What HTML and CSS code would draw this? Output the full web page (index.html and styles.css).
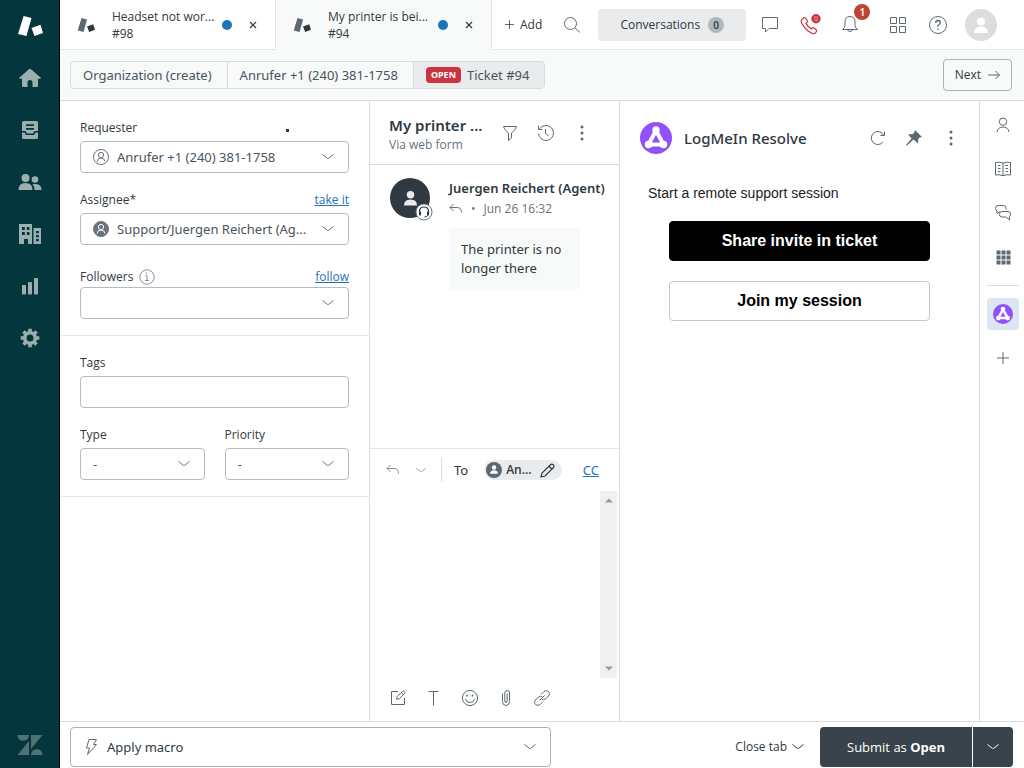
FILE: index.html
```html
<!DOCTYPE html>
<html lang="en">
<head>
<meta charset="utf-8">
<title>Ticket #94</title>
<link rel="stylesheet" href="styles.css">
</head>
<body>
<svg class="sprite" aria-hidden="true">
  <symbol id="chev" viewBox="0 0 12 8"><path d="M.8 1.7 5.3 5.3q.7.5 1.4 0L11.2 1.7" fill="none" stroke="currentColor" stroke-linecap="round"/></symbol>
  <symbol id="blocks" viewBox="0 0 26 22"><path d="M6.600 1 14.500 3 9.500 21 1 19z"/><path class="blocks-small" d="M14.500 13 23.500 9.800 26 18 17.500 21z"/></symbol>
  <symbol id="dots" viewBox="0 0 4 16"><g fill="currentColor"><circle cx="2" cy="2" r="1.500"/><circle cx="2" cy="8" r="1.500"/><circle cx="2" cy="14" r="1.500"/></g></symbol>
  <symbol id="reply" viewBox="0 0 14 12"><path d="M4.500 1 1 4.500 4.500 8M1 4.500H8q4.500 0 4.500 5" fill="none" stroke="currentColor"/></symbol>
  <symbol id="x" viewBox="0 0 8 8"><path d="M1 1 7 7M7 1 1 7" stroke="currentColor" stroke-width="1.200"/></symbol>
  <symbol id="plus" viewBox="0 0 12 12"><path d="M6 0V12M0 6H12" stroke="currentColor"/></symbol>
  <symbol id="resolve" viewBox="0 0 32 32"><circle cx="16" cy="16" r="16" fill="#9050fb"/><path d="M16 8.500 8.500 22.500H23.500z" fill="none" stroke="#fff" stroke-width="4" stroke-linejoin="round"/><circle cx="16" cy="8" r="3.700" fill="#fff"/><circle cx="8.500" cy="22.500" r="3.700" fill="#fff"/><circle cx="23.500" cy="22.500" r="3.700" fill="#fff"/></symbol>
  <symbol id="person" viewBox="0 0 14 16"><circle cx="7" cy="4.500" r="4"/><path d="M0 16Q0 9.500 7 9.500T14 16z"/></symbol>
</svg>

<nav class="nav" aria-label="Main">
  <a class="nav-item nav-logo" href="#" aria-label="Support"><svg width="26" height="22"><use href="#blocks"/></svg></a>
  <a class="nav-item" href="#" aria-label="Home"><svg width="22" height="20" viewBox="0 0 22 20"><path d="M10 1.300q1-.9 2 0L21.500 9.500q.8 1-.5 1.300H19V17.500q0 1.500-1.500 1.500H13.500V14.500Q13.500 12 11 12T8.500 14.500V19H4.500Q3 19 3 17.500V10.800H1Q-.3 10.500.5 9.500z"/></svg></a>
  <a class="nav-item" href="#" aria-label="Views"><svg width="18" height="20" viewBox="0 0 18 20"><path fill-rule="evenodd" d="M2.500 1H15.500Q17 1 17 2.500V11H13.500L12 13.500H6L4.500 11H1V2.500Q1 1 2.500 1zM5 4.200V6H13V4.200zM5 8V9.800H13V8z"/><path d="M1 12.500H3.500L5 15H13L14.500 12.500H17V17.500Q17 19 15.500 19H2.500Q1 19 1 17.500z"/></svg></a>
  <a class="nav-item" href="#" aria-label="Customers"><svg width="24" height="18" viewBox="0 0 24 18"><circle cx="7.500" cy="5" r="4"/><path d="M.5 17Q.5 10 7.500 10T14.500 17z"/><circle cx="17" cy="6.500" r="3.300"/><path d="M14.500 11.300Q23.500 10 23.500 17H16.500Q16.500 13.500 14.500 11.300z"/></svg></a>
  <a class="nav-item" href="#" aria-label="Organizations"><svg width="24" height="22" viewBox="0 0 24 22"><path fill-rule="evenodd" d="M1 1H14V21H10V16H6V21H1zM4 4V7H6.800V4zM8.800 4V7H11.500V4zM4 9V12H6.800V9zM8.800 9V12H11.500V9z"/><path fill-rule="evenodd" d="M15.500 5H23V21H15.500zM18 8V10.300H20.800V8zM18 12V14.300H20.800V12zM18 16V18.300H20.800V16z"/></svg></a>
  <a class="nav-item" href="#" aria-label="Reporting"><svg width="18" height="18" viewBox="0 0 18 18"><rect x="1" y="8" width="4" height="9.500" rx="1"/><rect x="7" y="5" width="4" height="12.500" rx="1"/><rect x="13" y="1" width="4" height="16.500" rx="1"/></svg></a>
  <a class="nav-item" href="#" aria-label="Admin"><svg width="20" height="20" viewBox="-10 -10 20 20"><circle r="5.300" fill="none" stroke="currentColor" stroke-width="3.600"/><path d="M0-9.300V-6M0 9.300V6M-9.300 0H-6M9.300 0H6M-6.500-6.500-4.500-4.500M6.500 6.500 4.500 4.500M-6.500 6.500-4.500 4.500M6.500-6.500 4.500-4.500" stroke="currentColor" stroke-width="3.600"/></svg></a>
  <a class="nav-item nav-brand" href="#" aria-label="Zendesk"><svg width="26" height="20" viewBox="0 0 26 20"><path d="M.5 0H12Q11.500 5.800 6.200 5.800T.5 0zM12 6V20H.5zM14 0H25.500L14 14zM14 20Q14.500 14.200 19.800 14.200T25.500 20z"/></svg></a>
</nav>

<div class="shell">
  <header class="topbar">
    <div class="tab">
      <svg class="tab-icon" width="18" height="16"><use href="#blocks"/></svg>
      <a class="tab-text" href="#">Headset not wor...<br>#98</a>
      <span class="tab-dot"></span>
      <button class="icon-btn tab-close" aria-label="Close #98"><svg width="8" height="8"><use href="#x"/></svg></button>
    </div>
    <div class="tab tab-active">
      <svg class="tab-icon" width="18" height="16"><use href="#blocks"/></svg>
      <a class="tab-text" href="#">My printer is bei...<br>#94</a>
      <span class="tab-dot"></span>
      <button class="icon-btn tab-close" aria-label="Close #94"><svg width="8" height="8"><use href="#x"/></svg></button>
    </div>
    <div class="tools">
      <button class="icon-btn add"><svg width="9" height="9"><use href="#plus"/></svg>Add</button>
      <button class="icon-btn search" aria-label="Search"><svg width="18" height="18" viewBox="0 0 18 18" fill="none" stroke="currentColor"><circle cx="7.500" cy="7.500" r="6"/><path d="M12 12 17 16.500"/></svg></button>
      <button class="conversations">Conversations <span class="count">0</span></button>
      <button class="icon-btn tool tool-chat" aria-label="Chat"><svg width="18" height="18" viewBox="0 0 18 18" fill="none" stroke="currentColor"><path d="M1.500 1.500H16.500V12.500H8L4.500 16V12.500H1.500z"/></svg></button>
      <button class="icon-btn tool tool-call" aria-label="Call"><svg width="22" height="22" viewBox="0 0 22 22"><path d="M3 5.200 5.200 3.700Q6 3.400 6.500 4L8.500 7Q8.900 8 8 8.600L7 9.400Q9 13 12.300 15L13.200 14Q14 13.200 14.800 13.800L17.300 16Q18 16.700 17.500 17.500L16 19.300Q14.500 20.500 11.500 18.600Q5.500 14.800 2.600 9Q1.600 6.500 3 5.200z" fill="none" stroke="currentColor" stroke-width="1.200"/><circle cx="17" cy="4.700" r="4.700" fill="currentColor"/><path d="M15.500 2.500H18.500V4.300H15.500zM15.500 5.500H18.500V7H15.500z" fill="none" stroke="#e58a92" stroke-width=".7"/></svg></button>
      <button class="icon-btn tool tool-bell" aria-label="Notifications"><svg width="18" height="18" viewBox="0 0 18 18" fill="none" stroke="currentColor"><path d="M9 .5Q14 .5 14 6V9.500Q14.200 12 16.500 13.500H1.500Q3.800 12 4 9.500V6Q4 .5 9 .5zM6.500 13.500Q7 15.500 9 15.500T11.500 13.500"/></svg><span class="badge">1</span></button>
      <button class="icon-btn tool tool-apps" aria-label="Products"><svg width="18" height="18" viewBox="0 0 18 18" fill="none" stroke="currentColor"><path d="M1.500 1.500H7.500V7.500H1.500zM10.500 1.500H16.500V7.500H10.500zM1.500 10.500H7.500V16.500H1.500zM10.500 10.500H16.500V16.500H10.500z"/></svg></button>
      <button class="icon-btn tool" aria-label="Help"><svg width="20" height="20" viewBox="0 0 20 20" fill="none" stroke="currentColor"><circle cx="10" cy="10" r="8.500"/><path d="M7.700 8Q7.700 5.500 10 5.500T12.300 7.700Q12.300 8.800 11 9.500T10 12M10 13.500V15" stroke-width="1.300"/></svg></button>
      <button class="icon-btn avatar-top" aria-label="Profile"><svg width="14" height="16" fill="#fff"><use href="#person"/></svg></button>
    </div>
  </header>

  <div class="crumbbar">
    <nav class="crumbs" aria-label="Breadcrumb">
      <a href="#">Organization (create)</a>
      <a href="#">Anrufer +1 (240) 381-1758</a>
      <a href="#" class="crumb-on"><span class="open">OPEN</span>Ticket #94</a>
    </nav>
    <button class="next">Next <svg width="14" height="10" viewBox="0 0 14 10" fill="none" stroke="currentColor"><path d="M1 5H12.500M8.500 1 12.500 5 8.500 9"/></svg></button>
  </div>

  <main class="work">
    <form class="props">
      <div class="section">
        <div class="field">
          <div class="label-row"><label for="requester">Requester</label><span class="mark"></span></div>
          <div class="select has-icon">
            <svg class="lead" width="16" height="16" viewBox="0 0 16 16" fill="none" stroke="currentColor"><circle cx="8" cy="8" r="7.500"/><circle cx="8" cy="6" r="2.600"/><path d="M4 12.500Q4.500 9 8 9T12 12.500"/></svg>
            <select id="requester"><option>Anrufer +1 (240) 381-1758</option></select>
            <svg class="chev" width="12" height="8"><use href="#chev"/></svg>
          </div>
        </div>
        <div class="field">
          <div class="label-row"><label for="assignee">Assignee*</label><a href="#">take it</a></div>
          <div class="select has-icon">
            <svg class="lead" width="16" height="16" viewBox="0 0 16 16" fill="none" stroke="#fff"><circle cx="8" cy="8" r="7.500" fill="#68737d" stroke="#68737d"/><circle cx="8" cy="6" r="2.600"/><path d="M4 12.500Q4.500 9 8 9T12 12.500"/></svg>
            <select id="assignee"><option>Support/Juergen Reichert (Ag...</option></select>
            <svg class="chev" width="12" height="8"><use href="#chev"/></svg>
          </div>
        </div>
        <div class="field field-tight">
          <div class="label-row"><label for="followers">Followers</label><svg class="info" width="16" height="16" viewBox="0 0 16 16" fill="none" stroke="currentColor"><circle cx="8" cy="8" r="7.200"/><path d="M6.500 6.500H8V11.500M6 11.500H10M7.500 3.500V5"/></svg><a href="#">follow</a></div>
          <div class="select">
            <select id="followers"><option></option></select>
            <svg class="chev" width="12" height="8"><use href="#chev"/></svg>
          </div>
        </div>
      </div>
      <div class="section">
        <div class="field">
          <div class="label-row"><label for="tags">Tags</label></div>
          <input class="box" id="tags" type="text">
        </div>
        <div class="pair">
          <div class="field">
            <div class="label-row"><label for="type">Type</label></div>
            <div class="select"><select id="type"><option>-</option></select><svg class="chev" width="12" height="8"><use href="#chev"/></svg></div>
          </div>
          <div class="field">
            <div class="label-row"><label for="priority">Priority</label></div>
            <div class="select"><select id="priority"><option>-</option></select><svg class="chev" width="12" height="8"><use href="#chev"/></svg></div>
          </div>
        </div>
      </div>
    </form>

    <section class="thread">
      <header class="thread-head">
        <div class="thread-title"><h1>My printer ...</h1><p>Via web form</p></div>
        <button class="icon-btn" aria-label="Filter"><svg width="16" height="16" viewBox="0 0 16 16" fill="none" stroke="currentColor"><path d="M1.500 1.500H14.500Q14.500 4 9.500 8V13L6.500 15.500V8Q1.500 4 1.500 1.500z"/></svg></button>
        <button class="icon-btn" aria-label="History"><svg width="18" height="18" viewBox="0 0 18 18" fill="none" stroke="currentColor"><path d="M2.300 5Q4.500 1.500 9 1.500A7.500 7.500 0 1 1 1.500 9.500M1.500 1.500V5.500H5.500M8.500 5V9.500L11.500 12"/></svg></button>
        <button class="icon-btn" aria-label="More"><svg width="4" height="16"><use href="#dots"/></svg></button>
      </header>
      <article class="message">
        <div class="avatar">
          <svg width="13" height="16" fill="#e9ebed"><use href="#person"/></svg>
          <svg class="headset" width="18" height="18" viewBox="0 0 18 18"><circle cx="9" cy="9" r="8" fill="#fff" stroke="#68737d"/><path d="M4.500 10V8.500Q4.500 4 9 4T13.500 8.500V10" fill="none" stroke="#2f3941" stroke-width="1.200"/><path d="M4 8.500H6V12.500H5Q4 12.500 4 11.500zM14 8.500H12V12.500H13Q14 12.500 14 11.500z" fill="#2f3941"/><path d="M13 12Q12.500 14 9.500 14" fill="none" stroke="#2f3941"/></svg>
        </div>
        <div class="message-body">
          <h2>Juergen Reichert (Agent)</h2>
          <p class="meta"><svg width="14" height="12"><use href="#reply"/></svg><span>•</span><time>Jun 26 16:32</time></p>
          <p class="bubble">The printer is no longer there</p>
        </div>
      </article>
      <div class="composer">
        <div class="to-row">
          <button class="icon-btn reply" aria-label="Reply type"><svg width="14" height="12"><use href="#reply"/></svg><svg width="10" height="7"><use href="#chev"/></svg></button>
          <span class="to">To</span>
          <button class="chip"><svg width="16" height="16" viewBox="0 0 16 16"><circle cx="8" cy="8" r="8" fill="#5c6970"/><circle cx="8" cy="5.500" r="2.200" fill="#fff"/><path d="M4 11.800Q4 8.200 8 8.200T12 11.800z" fill="#fff"/></svg>An...<svg class="pen" width="15" height="15" viewBox="0 0 15 15" fill="none" stroke="currentColor" stroke-width="1.200"><path d="M1 14 2 10 10.500 1.800Q11.800.6 13.200 1.800T13.500 4.500L5 13zM9 3.300 11.800 6"/></svg></button>
          <a class="cc" href="#">CC</a>
        </div>
        <div class="editor">
          <textarea aria-label="Reply"></textarea>
          <div class="scroll"><svg width="8" height="5" viewBox="0 0 8 5"><path d="M4 .5 8 4.500H0z"/></svg><svg width="8" height="5" viewBox="0 0 8 5"><path d="M0 .5H8L4 4.500z"/></svg></div>
        </div>
        <div class="format">
          <button class="icon-btn" aria-label="Compose"><svg width="16" height="16" viewBox="0 0 16 16" fill="none" stroke="currentColor"><path d="M8 1.500H1.500V14.500H14.500V8M6.500 9.500 7.300 6.500 12.500 1.300Q13.500.7 14.500 1.500T14.500 3.500L9.400 8.700zM11.300 2.500 13.500 4.700"/></svg></button>
          <button class="icon-btn" aria-label="Text"><svg width="16" height="16" viewBox="0 0 16 16" fill="none" stroke="currentColor"><path d="M2.500 1.500H12.500M7.500 1.500V15.500"/></svg></button>
          <button class="icon-btn" aria-label="Emoji"><svg width="18" height="18" viewBox="0 0 18 18" fill="none" stroke="currentColor"><circle cx="9" cy="9" r="7.600"/><path d="M4.500 10Q5.300 13.500 9 13.500T13.500 10"/><path d="M6 5.800V7.400M11.500 5.800V7.400" stroke-width="1.600"/></svg></button>
          <button class="icon-btn" aria-label="Attach"><svg width="10" height="18" viewBox="0 0 10 18" fill="none" stroke="currentColor"><path d="M1.500 4.500V12.500Q1.500 16.500 5 16.500T8.500 12.500V4Q8.500 1.500 6.200 1.500T3.800 4V12Q3.800 13.500 5 13.500T6.200 12V4.500"/></svg></button>
          <button class="icon-btn" aria-label="Link"><svg width="18" height="18" viewBox="0 0 18 18" fill="none" stroke="currentColor"><path d="M6.500 11.500 11.500 6.500M8 5.500 11 2.500Q13.300.7 15.500 2.500T15.500 7L12.500 10Q10.500 11.500 8.500 10M10 12.500 7 15.500Q4.700 17.300 2.500 15.500T2.500 11L5.500 8Q7.500 6.500 9.500 8"/></svg></button>
        </div>
      </div>
    </section>

    <section class="app">
      <header class="app-head">
        <svg width="32" height="32"><use href="#resolve"/></svg>
        <h2>LogMeIn Resolve</h2>
        <button class="icon-btn" aria-label="Reload"><svg width="16" height="16" viewBox="0 0 16 16" fill="none" stroke="currentColor"><path d="M12.800 12.200A6.500 6.500 0 1 1 13.800 5.500M14.500 1.500V5.500H10.500"/></svg></button>
        <button class="icon-btn" aria-label="Unpin"><svg width="16" height="16" viewBox="0 0 16 16" fill="currentColor"><path d="M9 0 16 7Q13.500 7 12.300 8.800L12 13.500 7.500 9.500 1 15.500 0 15 5.500 8.500 2 4.500 7 4Q8.800 2.800 9 0z"/></svg></button>
        <button class="icon-btn" aria-label="More"><svg width="4" height="16"><use href="#dots"/></svg></button>
      </header>
      <p class="app-text">Start a remote support session</p>
      <div class="app-actions">
        <button class="app-btn app-primary">Share invite in ticket</button>
        <button class="app-btn">Join my session</button>
      </div>
    </section>

    <aside class="rail" aria-label="Apps">
      <button class="icon-btn" aria-label="User"><svg width="14" height="16" viewBox="0 0 14 16" fill="none" stroke="currentColor"><circle cx="7" cy="4.700" r="3.700"/><path d="M1 15Q2 10 7 10T13 15"/></svg></button>
      <button class="icon-btn" aria-label="Knowledge"><svg width="18" height="16" viewBox="0 0 18 16" fill="none" stroke="currentColor"><path d="M9 2Q5 .7 1.500 1.500V14Q5 13.200 9 14.700Q13 13.200 16.500 14V1.500Q13 .7 9 2zM9 2V14.700M4 4.500H6.500M4 7.500H6.500M4 10.500H6.500M11.500 4.500H14M11.500 7.500H14M11.500 10.500H14"/></svg></button>
      <button class="icon-btn" aria-label="Side conversations"><svg width="18" height="18" viewBox="0 0 18 18" fill="none" stroke="currentColor"><path d="M6 7.500 3 9.500V6.800Q1.500 6.300 1.500 4.500Q1.500 1.500 4 1.500H9.500Q12 1.500 12 4V5.500"/><path d="M8 7.500H14Q16.500 7.500 16.500 10Q16.500 12 15.500 12.600V16L12 13H8Q5.500 13 5.500 10.200T8 7.500z"/></svg></button>
      <button class="icon-btn" aria-label="All apps"><svg width="15" height="15" viewBox="0 0 15 15" fill="currentColor"><path d="M.5.5H4.500V4.500H.5zM5.500.5H9.500V4.500H5.500zM10.500.5H14.500V4.500H10.500zM.5 5.500H4.500V9.500H.5zM5.500 5.500H9.500V9.500H5.500zM10.500 5.500H14.500V9.500H10.500zM.5 10.500H4.500V14.500H.5zM5.500 10.500H9.500V14.500H5.500zM10.500 10.500H14.500V14.500H10.500z"/></svg></button>
      <hr>
      <button class="icon-btn rail-on" aria-label="LogMeIn Resolve"><svg width="20" height="20"><use href="#resolve"/></svg></button>
      <button class="icon-btn" aria-label="Add app"><svg width="12" height="12"><use href="#plus"/></svg></button>
    </aside>
  </main>

  <footer class="footer">
    <button class="macro"><svg width="14" height="18" viewBox="0 0 14 18" fill="none" stroke="currentColor"><path d="M4 1.500H11.500L8.500 6.500H11.500L2.500 16.500 4.500 10H1.500z"/></svg><span>Apply macro</span><svg width="12" height="8"><use href="#chev"/></svg></button>
    <button class="icon-btn close-tab">Close tab <svg width="12" height="8"><use href="#chev"/></svg></button>
    <div class="submit">
      <button class="submit-main">Submit as <b>Open</b></button>
      <button class="submit-more" aria-label="More submit options"><svg width="12" height="8"><use href="#chev"/></svg></button>
    </div>
  </footer>
</div>
</body>
</html>
```
FILE: styles.css
```css
* { box-sizing: border-box; }

body {
  margin: 0;
  display: flex;
  min-height: 100vh;
  background: #fff;
  color: #2f3941;
  font: 13px/20px "Noto Sans", "Open Sans", sans-serif;
}

h1, h2, p { margin: 0; }
svg { display: block; flex: none; }
button, input, select, textarea { font: inherit; color: inherit; }
a { color: #1f73b7; }

.sprite { position: absolute; width: 0; height: 0; }

/* Small interface text */
.tab-text, .add, .conversations, .next, .label-row, .meta,
.thread-title p, .chip, .close-tab, .submit {
  font-family: "Open Sans", "Noto Sans", sans-serif;
}

.icon-btn {
  display: flex;
  align-items: center;
  justify-content: center;
  flex: none;
  padding: 0;
  border: 0;
  background: none;
  color: #5c6970;
}

/* Main navigation */
.nav {
  display: flex;
  flex-direction: column;
  flex: none;
  width: 60px;
  background: #03363d;
  border-right: 1px solid #000;
}
.nav-item {
  display: flex;
  align-items: center;
  justify-content: center;
  height: 52px;
  color: #9bafb1;
  fill: currentColor;
}
.nav-logo { color: #fff; }
.nav-brand { margin-top: auto; height: 46px; color: #4f7277; }

.shell {
  display: flex;
  flex-direction: column;
  flex: 1;
  min-width: 0;
}

/* Tabs and tools */
.topbar { display: flex; height: 50px; }
.tab {
  display: flex;
  align-items: center;
  flex: none;
  width: 216px;
  padding: 0 17px;
  border: solid #e4e7e8;
  border-width: 0 1px 1px 0;
}
.tab-active { background: #f8f9f9; border-bottom-color: #f8f9f9; }
.tab-icon { fill: #5c6970; }
.blocks-small { fill: currentColor; }
.tab-text {
  flex: 1;
  margin-left: 17px;
  color: #2f3941;
  font-size: 12px;
  line-height: 17px;
  text-decoration: none;
  white-space: nowrap;
}
.tab-dot { width: 10px; height: 10px; border-radius: 50%; background: #1f73b7; }
.tab-close { margin-left: 16px; width: 10px; color: #2f3941; }

.tools {
  display: flex;
  align-items: center;
  flex: 1;
  min-width: 0;
  padding: 0 27px 0 13px;
  border-bottom: 1px solid #e4e7e8;
}
.add { gap: 6px; color: #2f3941; font-size: 12px; }
.search { margin: 0 17px 0 21px; }
.conversations {
  display: flex;
  align-items: center;
  justify-content: center;
  gap: 8px;
  width: 148px;
  height: 32px;
  border: 0;
  border-radius: 4px;
  background: #e9ebed;
  font-size: 12px;
}
.count {
  width: 16px;
  height: 16px;
  border-radius: 50%;
  background: #b0b8be;
  font-size: 10px;
  font-weight: 600;
  line-height: 16px;
}
.tool { width: 40px; }
.tool-chat { margin-left: 4px; }
.tool-call { color: #cc3340; }
.tool-bell { position: relative; }
.tool-apps { margin-left: 8px; }
.badge {
  position: absolute;
  top: -12px;
  right: 0;
  width: 16px;
  height: 16px;
  border-radius: 50%;
  background: #bd4333;
  color: #fff;
  font-size: 10px;
  font-weight: 600;
  line-height: 16px;
}
.avatar-top {
  width: 32px;
  height: 32px;
  margin-left: auto;
  border-radius: 50%;
  background: #ddd;
}

/* Breadcrumbs */
.crumbbar {
  display: flex;
  align-items: center;
  justify-content: space-between;
  height: 51px;
  padding: 0 12px 0 10px;
  background: #f8f9f9;
  border-bottom: 1px solid #d8dcde;
}
.crumbs {
  display: flex;
  border: 1px solid #d8dcde;
  border-radius: 4px;
  overflow: hidden;
}
.crumbs a {
  display: flex;
  align-items: center;
  padding: 0 15px 0 12px;
  height: 26px;
  color: #49545c;
  text-decoration: none;
}
.crumbs a + a { border-left: 1px solid #d8dcde; }
.crumbs .crumb-on { background: #e9ebed; }
.open {
  margin-right: 6px;
  padding: 0 5px;
  border-radius: 4px;
  background: #cc3340;
  color: #fff;
  font-size: 9px;
  font-weight: 700;
  line-height: 16px;
}
.next {
  display: flex;
  align-items: center;
  gap: 6px;
  height: 32px;
  padding: 0 10px 0 11px;
  border: 1px solid #a9b2b9;
  border-radius: 4px;
  background: none;
  font-size: 12px;
}
.next svg { color: #5c6970; }

/* Workspace columns */
.work {
  display: grid;
  grid-template-columns: 310px 250px minmax(0, 1fr) 44px;
  flex: 1;
}
.props, .thread, .app { border-right: 1px solid #d8dcde; }

.section {
  display: flex;
  flex-direction: column;
  gap: 16px;
  padding: 16px 20px;
  border-bottom: 1px solid #e4e7e8;
}
.field { display: flex; flex-direction: column; gap: 3px; min-width: 0; }
.field-tight { gap: 0; padding-top: 5px; }
.label-row {
  display: flex;
  align-items: center;
  height: 21px;
  font-size: 12px;
}
.label-row label { font-weight: 500; }
.label-row a { margin-left: auto; }
.info { margin-left: 6px; color: #87929d; }
.mark {
  width: 3px;
  height: 3px;
  margin: 6px 60px 0 auto;
  background: #2f3941;
}
.box, .select select {
  width: 100%;
  height: 32px;
  padding: 0 12px;
  border: 1px solid #b5bcc1;
  border-radius: 4px;
  background: none;
  color: #49545c;
}
.select { position: relative; }
.select select { appearance: none; }
.select.has-icon select { padding-left: 36px; }
.lead { position: absolute; left: 13px; top: 8px; color: #68737d; }
.chev { position: absolute; right: 15px; top: 12px; color: #68737d; pointer-events: none; }
.pair { display: grid; grid-template-columns: 1fr 1fr; gap: 20px; }

/* Conversation */
.thread { display: flex; flex-direction: column; }
.thread-head {
  display: flex;
  align-items: center;
  gap: 19px;
  height: 64px;
  padding: 0 29px 0 19px;
  border-bottom: 1px solid #d8dcde;
}
.thread-title { flex: 1; min-width: 0; padding-top: 4px; }
.thread-title h1 { font-size: 15px; font-weight: 600; line-height: 20px; white-space: nowrap; }
.thread-title p { color: #68737d; font-size: 12px; }
.thread-head .icon-btn:last-child { width: 16px; }

.message { display: flex; flex: 1; gap: 19px; padding: 13px 0 0 20px; }
.avatar {
  position: relative;
  display: flex;
  align-items: center;
  justify-content: center;
  flex: none;
  width: 40px;
  height: 40px;
  border-radius: 50%;
  background: #2f3941;
}
.headset { position: absolute; right: -3px; bottom: -3px; }
.message-body h2 { font-size: 13px; font-weight: 600; white-space: nowrap; }
.meta { display: flex; align-items: center; gap: 8px; padding-top: 1px; color: #68737d; font-size: 12px; }
.bubble {
  width: 131px;
  margin-top: 9px;
  padding: 12px;
  border-radius: 4px;
  background: #f8f9f9;
  line-height: 19px;
}

.composer {
  display: flex;
  flex-direction: column;
  height: 273px;
  border-top: 1px solid #e4e7e8;
}
.to-row { display: flex; align-items: center; height: 42px; padding: 0 20px 0 16px; }
.reply { gap: 16px; padding-right: 15px; height: 24px; border-right: 1px solid #d8dcde; color: #87929d; }
.to { margin-left: 12px; }
.chip {
  display: flex;
  align-items: center;
  gap: 4px;
  height: 20px;
  margin-left: 16px;
  padding: 0 7px 0 2px;
  border: 0;
  border-radius: 10px;
  background: #e9ebed;
  font-size: 12px;
  font-weight: 600;
}
.pen { margin-left: 4px; }
.cc { margin-left: auto; }
.editor { display: flex; flex: 1; padding-right: 2px; }
.editor textarea { flex: 1; min-width: 0; border: 0; resize: none; overflow: hidden; }
.scroll {
  display: flex;
  flex-direction: column;
  align-items: center;
  justify-content: space-between;
  width: 17px;
  padding: 7px 0;
  background: #f0f0f0;
  fill: #9a9a9a;
}
.format { display: flex; align-items: center; height: 43px; padding: 0 10px 3px; }
.format .icon-btn { width: 36px; }

/* Sidebar app */
.app-head { display: flex; align-items: center; gap: 20px; padding: 21px 19px 0 20px; }
.app-head h2 { flex: 1; margin-left: -8px; font-size: 15px; font-weight: 500; }
.app-head .icon-btn:last-child { width: 18px; }
.app-text, .app-btn { font-family: "Liberation Sans", Arial, sans-serif; }
.app-text { padding: 29px 28px 18px; color: #222; font-size: 14px; }
.app-actions { display: flex; flex-direction: column; gap: 20px; padding: 0 49px; }
.app-btn {
  height: 40px;
  border: 1px solid #bcc8d2;
  border-radius: 4px;
  background: #fff;
  color: #000;
  font-size: 16px;
  font-weight: 700;
}
.app-primary { border-color: #000; background: #000; color: #fff; }

.rail { display: flex; flex-direction: column; align-items: center; padding: 8px 0 8px 2px; }
.rail .icon-btn { width: 32px; height: 32px; margin-bottom: 12px; }
.rail hr { width: 32px; margin: 0 0 12px; border: 0; border-top: 1px solid #d8dcde; }
.rail .rail-on { border-radius: 4px; background: #dae6f1; }

/* Footer */
.footer {
  display: flex;
  align-items: center;
  height: 47px;
  padding: 4px 11px 0 10px;
  border-top: 1px solid #d8dcde;
}
.macro {
  display: flex;
  align-items: center;
  gap: 8px;
  flex: 1;
  max-width: 481px;
  height: 40px;
  padding: 0 14px;
  border: 1px solid #a9b2b9;
  border-radius: 4px;
  background: none;
  text-align: left;
}
.macro span { flex: 1; }
.macro svg { color: #5c6970; }
.close-tab { gap: 5px; margin: 0 16px 0 auto; color: #2f3941; font-size: 12px; }
.submit { display: flex; gap: 1px; }
.submit button {
  height: 40px;
  border: 0;
  background: #38434b;
  color: #fff;
}
.submit .submit-main { width: 152px; border-radius: 4px 0 0 4px; }
.submit .submit-more { display: flex; align-items: center; justify-content: center; width: 40px; border-radius: 0 4px 4px 0; }
```
